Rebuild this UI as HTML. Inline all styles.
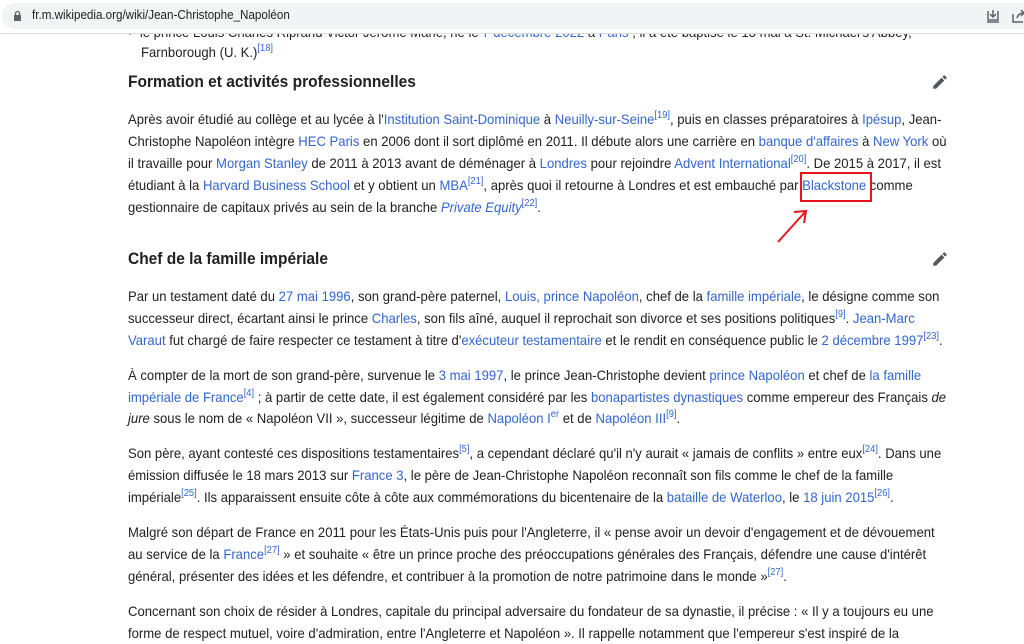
<!DOCTYPE html>
<html><head><meta charset="utf-8"><style>
body{margin:0;width:1024px;height:643px;overflow:hidden;background:#fff;font-family:"Liberation Sans",Arial,sans-serif;color:#202122;position:relative}
.bar{position:absolute;left:0;top:0;width:1024px;height:33px;background:#fff;border-bottom:1px solid #dadce0;z-index:2}
.pill{position:absolute;left:2px;top:3px;width:1040px;height:26px;border-radius:13px;background:#f1f3f4}
.url{position:absolute;left:32px;top:8px;font-size:12.5px;color:#202124;transform:scaleX(.93);transform-origin:left}
.l{position:absolute;left:128px;white-space:nowrap;font-size:14px;line-height:22px;transform:scaleX(.935);transform-origin:left}
a{color:#3366cc;text-decoration:none}
sup{font-size:10px;line-height:0;vertical-align:6px}
.h{position:absolute;left:128px;font-weight:bold;font-size:16.5px;white-space:nowrap;transform:scaleX(.94);transform-origin:left}
.pen{position:absolute;left:931px}
</style></head><body>
<div class="bar"><div class="pill"></div>
<svg style="position:absolute;left:13px;top:10px" width="9" height="12" viewBox="0 0 9 12"><rect x="1" y="5" width="7" height="6" fill="#5f6368"/><path d="M2.5 5V3.5a2 2 0 0 1 4 0V5" stroke="#5f6368" fill="none" stroke-width="1.3"/></svg>
<div class="url">fr.m.wikipedia.org/wiki/Jean-Christophe_Napoléon</div>
<svg style="position:absolute;left:985px;top:8px" width="16" height="16" viewBox="0 0 16 16" fill="none" stroke="#5f6368" stroke-width="1.5"><path d="M3 3v9h10V3M8 2v7M5 6l3 3 3-3M2 14h12"/></svg>
<svg style="position:absolute;left:1010px;top:8px" width="16" height="16" viewBox="0 0 16 16" fill="none" stroke="#5f6368" stroke-width="1.5"><path d="M3 6v8h10M7 10c1-4 4-5 7-5M11 2l3 3-3 3"/></svg>
</div>
<div class="l" style="top:21px;left:128px">•&nbsp;&nbsp;le prince Louis Charles Riprand Victor Jérôme Marie, né le <a>7 décembre 2022</a> à <a>Paris</a> ; il a été baptisé le 13 mai à St. Michael's Abbey,</div>
<div class="l" style="top:41px;left:141px">Farnborough (U. K.)<sup><a>[18]</a></sup></div>
<div class="h" style="top:73px">Formation et activités professionnelles</div>
<svg class="pen" style="top:73px" width="18" height="18" viewBox="0 0 24 24"><path fill="#54595d" d="M3 17.25V21h3.75L17.8 9.94l-3.75-3.75zM20.7 7.04a1 1 0 0 0 0-1.41l-2.34-2.34a1 1 0 0 0-1.41 0l-1.83 1.83 3.75 3.75z"/></svg>
<div class="l" style="top:108px">Après avoir étudié au collège et au lycée à l'<a>Institution Saint-Dominique</a> à <a>Neuilly-sur-Seine</a><sup><a>[19]</a></sup>, puis en classes préparatoires à <a>Ipésup</a>, Jean-</div>
<div class="l" style="top:130px">Christophe Napoléon intègre <a>HEC Paris</a> en 2006 dont il sort diplômé en 2011. Il débute alors une carrière en <a>banque d'affaires</a> à <a>New York</a> où</div>
<div class="l" style="top:152px">il travaille pour <a>Morgan Stanley</a> de 2011 à 2013 avant de déménager à <a>Londres</a> pour rejoindre <a>Advent International</a><sup><a>[20]</a></sup>. De 2015 à 2017, il est</div>
<div class="l" style="top:174px">étudiant à la <a>Harvard Business School</a> et y obtient un <a>MBA</a><sup><a>[21]</a></sup>, après quoi il retourne à Londres et est embauché par <a>Blackstone</a> comme</div>
<div class="l" style="top:196px">gestionnaire de capitaux privés au sein de la branche <a><i>Private Equity</i></a><sup><a>[22]</a></sup>.</div>
<div style="position:absolute;left:800px;top:172px;width:68px;height:26px;border:2px solid #e8141c"></div>
<svg style="position:absolute;left:775px;top:205px" width="36" height="40" viewBox="0 0 36 40"><path d="M3 37L31 6M19 7l12-1-2 12" stroke="#e8141c" stroke-width="2" fill="none"/></svg>
<div class="h" style="top:250px">Chef de la famille impériale</div>
<svg class="pen" style="top:250px" width="18" height="18" viewBox="0 0 24 24"><path fill="#54595d" d="M3 17.25V21h3.75L17.8 9.94l-3.75-3.75zM20.7 7.04a1 1 0 0 0 0-1.41l-2.34-2.34a1 1 0 0 0-1.41 0l-1.83 1.83 3.75 3.75z"/></svg>
<div class="l" style="top:285px">Par un testament daté du <a>27 mai 1996</a>, son grand-père paternel, <a>Louis, prince Napoléon</a>, chef de la <a>famille impériale</a>, le désigne comme son</div>
<div class="l" style="top:307px">successeur direct, écartant ainsi le prince <a>Charles</a>, son fils aîné, auquel il reprochait son divorce et ses positions politiques<sup><a>[9]</a></sup>. <a>Jean-Marc</a></div>
<div class="l" style="top:329px"><a>Varaut</a> fut chargé de faire respecter ce testament à titre d'<a>exécuteur testamentaire</a> et le rendit en conséquence public le <a>2 décembre 1997</a><sup><a>[23]</a></sup>.</div>
<div class="l" style="top:364px">À compter de la mort de son grand-père, survenue le <a>3 mai 1997</a>, le prince Jean-Christophe devient <a>prince Napoléon</a> et chef de <a>la famille</a></div>
<div class="l" style="top:386px"><a>impériale de France</a><sup><a>[4]</a></sup> ; à partir de cette date, il est également considéré par les <a>bonapartistes dynastiques</a> comme empereur des Français <i>de</i></div>
<div class="l" style="top:407px"><i>jure</i> sous le nom de « Napoléon VII », successeur légitime de <a>Napoléon I<sup>er</sup></a> et de <a>Napoléon III</a><sup><a>[9]</a></sup>.</div>
<div class="l" style="top:442px">Son père, ayant contesté ces dispositions testamentaires<sup><a>[5]</a></sup>, a cependant déclaré qu'il n'y aurait « jamais de conflits » entre eux<sup><a>[24]</a></sup>. Dans une</div>
<div class="l" style="top:464px">émission diffusée le 18 mars 2013 sur <a>France 3</a>, le père de Jean-Christophe Napoléon reconnaît son fils comme le chef de la famille</div>
<div class="l" style="top:486px">impériale<sup><a>[25]</a></sup>. Ils apparaissent ensuite côte à côte aux commémorations du bicentenaire de la <a>bataille de Waterloo</a>, le <a>18 juin 2015</a><sup><a>[26]</a></sup>.</div>
<div class="l" style="top:521px">Malgré son départ de France en 2011 pour les États-Unis puis pour l'Angleterre, il « pense avoir un devoir d'engagement et de dévouement</div>
<div class="l" style="top:543px">au service de la <a>France</a><sup><a>[27]</a></sup> » et souhaite « être un prince proche des préoccupations générales des Français, défendre une cause d'intérêt</div>
<div class="l" style="top:565px">général, présenter des idées et les défendre, et contribuer à la promotion de notre patrimoine dans le monde »<sup><a>[27]</a></sup>.</div>
<div class="l" style="top:600px">Concernant son choix de résider à Londres, capitale du principal adversaire du fondateur de sa dynastie, il précise : « Il y a toujours eu une</div>
<div class="l" style="top:622px">forme de respect mutuel, voire d'admiration, entre l'Angleterre et Napoléon ». Il rappelle notamment que l'empereur s'est inspiré de la</div>
</body></html>
